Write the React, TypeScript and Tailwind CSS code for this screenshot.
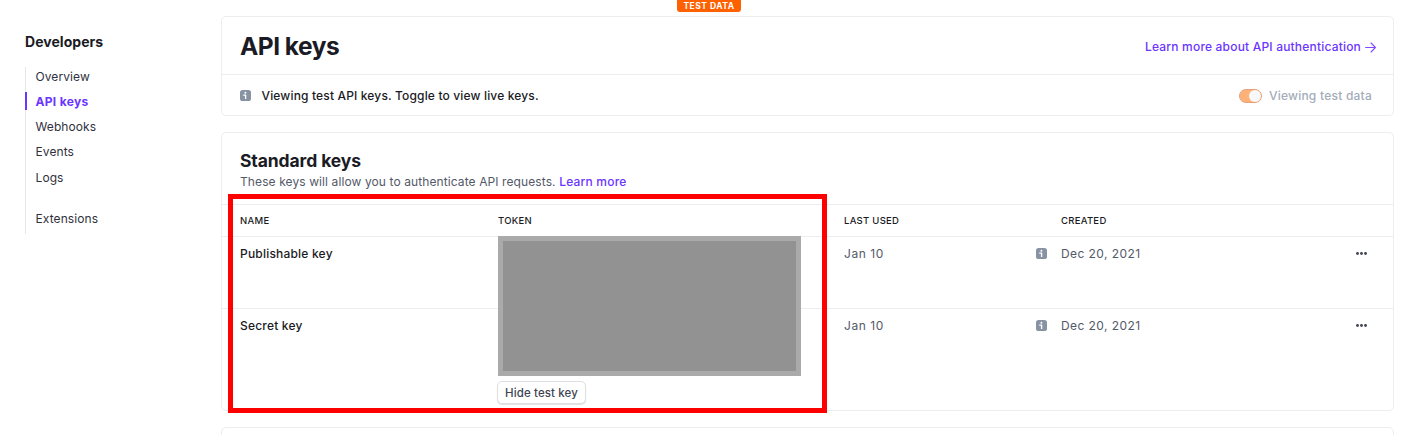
import React from "react";

const InfoIcon = () => (
  <svg width="11" height="11" viewBox="0 0 11 11" className="block shrink-0">
    <rect width="11" height="11" rx="2.6" fill="#8792a2" />
    <circle cx="5.4" cy="2.8" r="0.95" fill="#fff" />
    <path d="M3.2 5.1h2.4v3.9" stroke="#fff" strokeWidth="1.3" fill="none" />
  </svg>
);

const DotsIcon = () => (
  <svg width="11" height="3" viewBox="0 0 11 3" className="block" fill="#414552">
    <circle cx="1.5" cy="1.5" r="1.45" />
    <circle cx="5.5" cy="1.5" r="1.45" />
    <circle cx="9.5" cy="1.5" r="1.45" />
  </svg>
);

const ArrowIcon = () => (
  <svg
    width="11"
    height="11"
    viewBox="0 0 11 11"
    className="block"
    fill="none"
    stroke="#7f4dff"
    strokeWidth="1.1"
    strokeLinecap="round"
    strokeLinejoin="round"
  >
    <path d="M0.6 5.5h9.8M6.1 1l4.3 4.5-4.3 4.5" />
  </svg>
);

const navItems = [
  { label: "Overview", row: "h-[25px] pt-px" },
  { label: "API keys", row: "h-[25px] pt-px", active: true },
  { label: "Webhooks", row: "h-[25px] pt-px" },
  { label: "Events", row: "h-[25px] pt-px" },
  { label: "Logs", row: "h-[26px] pt-[2px]" },
  { label: "Extensions", row: "mt-4 h-[25px] pt-px" },
];

const Sidebar = () => (
  <nav className="w-[221px] shrink-0 pl-[25px] pt-8">
    <h2 className="h-5 text-[14px] leading-5 font-bold tracking-[0.04px] text-[#1a1b25]">Developers</h2>
    <ul className="mt-[15px] h-[167px] w-[150px] border-l border-[#e3e8ee]">
      {navItems.map((item) => (
        <li
          key={item.label}
          className={`relative flex items-start pl-[9.5px] text-[12px] leading-[18px] ${item.row} ${
            item.active ? "font-bold tracking-[0.32px] text-[#6b35ff]" : "tracking-[0.09px] text-[#30313d]"
          }`}
        >
          {item.active && <i className="absolute top-0 -left-px h-[18px] w-[2px] bg-[#6b35ff]" />}
          <span>{item.label}</span>
        </li>
      ))}
    </ul>
  </nav>
);

const KeyRow = ({ name, children, className }: { name: string; children?: React.ReactNode; className: string }) => (
  <div
    className={`grid grid-cols-[258px_346px_192px_25px_1fr_11px] pr-[26px] pl-[18px] pt-2 text-[12px] leading-[18px] ${className}`}
  >
    <span className="font-medium tracking-[0.2px] text-[#1a1b25]">{name}</span>
    <div>{children}</div>
    <span className="tracking-[0.58px] text-[#545969]">Jan 10</span>
    <div className="pt-[3px]">
      <InfoIcon />
    </div>
    <span className="tracking-[0.43px] text-[#545969]">Dec 20, 2021</span>
    <div className="pt-[7px]">
      <DotsIcon />
    </div>
  </div>
);

export default function App() {
  return (
    <div className="relative flex h-[435px] w-[1418px] overflow-hidden bg-white font-['Inter',sans-serif] whitespace-nowrap">
      <Sidebar />
      <main className="flex w-[1173px] shrink-0 flex-col gap-4 pt-4">
        <section className="h-[100px] shrink-0 rounded-[5px] border border-[#ebeef1]">
          <header className="flex h-[58px] items-center justify-between border-b border-[#ebeef1] pt-[3px] pr-[17px] pl-[18px]">
            <h1 className="pb-[2px] text-[24.5px] leading-9 font-bold tracking-[-0.5px] text-[#1a1b25]">API keys</h1>
            <a className="flex items-center gap-1 text-[12px] leading-[18px] font-medium tracking-[0.19px] text-[#6b35ff]">
              <span>Learn more about API authentication</span>
              <ArrowIcon />
            </a>
          </header>
          <div className="flex h-10 items-center pt-px pr-[21px] pl-[18px] text-[12px] leading-[18px]">
            <InfoIcon />
            <span className="ml-[10.5px] font-medium tracking-[0.155px] text-[#1a1b25]">
              Viewing test API keys. Toggle to view live keys.
            </span>
            <div className="ml-auto flex items-center gap-[7px]">
              <div className="flex h-[14px] w-[23px] items-center justify-end rounded-full border border-[#e8a07c] bg-[#ffb277]">
                <i className="h-3 w-3 rounded-full bg-[#f6f8fa]" />
              </div>
              <span className="font-medium tracking-[0.23px] text-[#a3acb9]">Viewing test data</span>
            </div>
          </div>
        </section>

        <section className="h-[279px] shrink-0 rounded-[5px] border border-[#ebeef1]">
          <header className="h-[72px] border-b border-[#ebeef1] pt-4 pl-[18px]">
            <h2 className="text-[17.5px] leading-6 font-bold tracking-[-0.1px] text-[#1a1b25]">Standard keys</h2>
            <p className="text-[12px] leading-[18px] tracking-[0.1px] text-[#545969]">
              <span>These keys will allow you to authenticate API requests.</span>{" "}
              <a className="font-medium tracking-[0.2px] text-[#6b35ff]">Learn more</a>
            </p>
          </header>
          <div className="grid h-8 grid-cols-[258px_346px_217px_1fr] items-center border-b border-[#ebeef1] pt-px pl-[18px] text-[9.5px] leading-[14px] font-medium tracking-[0.28px] text-[#1a1b25]">
            <span>NAME</span>
            <span>TOKEN</span>
            <span>LAST USED</span>
            <span>CREATED</span>
          </div>
          <KeyRow name="Publishable key" className="h-[72px] border-b border-[#ebeef1]" />
          <KeyRow name="Secret key" className="h-[101px]">
            <button className="mt-16 -ml-px flex h-[23px] w-[89px] items-center justify-center rounded-[5px] border border-[#dcdfe4] bg-white text-[11.5px] font-medium tracking-[0.12px] text-[#414552] shadow-[0_1px_1px_rgba(0,0,0,0.12)]">
              Hide test key
            </button>
          </KeyRow>
        </section>

        <section className="h-[60px] shrink-0 rounded-[5px] border border-[#ebeef1]" />
      </main>

      <div className="absolute top-0 left-[677px] flex h-3 w-16 items-center justify-center rounded-b-[3px] bg-[#ff6000] text-[8.5px] font-bold tracking-[0.5px] text-white">
        TEST DATA
      </div>
      <div className="absolute top-[236px] left-[498px] h-[140px] w-[303px] border-[5px] border-[#aaaaaa] bg-[#929292]" />
      <div className="absolute top-[194px] left-[228px] h-[219px] w-[599px] border-[5px] border-[#ff0000]" />
    </div>
  );
}
